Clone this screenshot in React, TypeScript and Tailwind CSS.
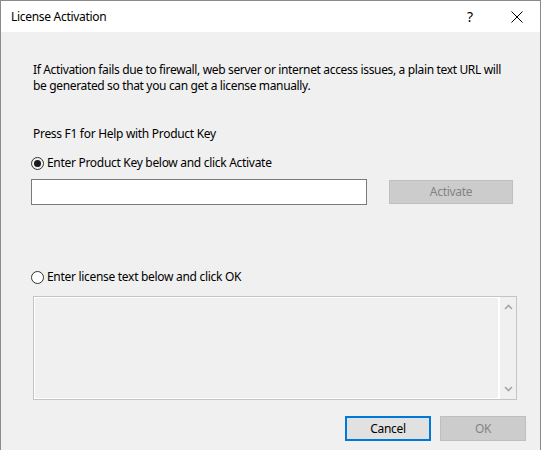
export default function App() {
  return (
    <div
      className="w-[541px] h-[450px] overflow-hidden border-l border-t border-r border-[#8a8a8a] bg-[#f0f0f0] text-[12px] leading-[16px] tracking-[-0.3px] text-black"
      style={{ fontFamily: '"Noto Sans", "Open Sans", sans-serif' }}
    >
      {/* title bar */}
      <div className="flex h-[31px] items-center bg-white pl-[10px]">
        <span className="flex-1 pt-[1px]">License Activation</span>
        <span className="w-[10px] text-center text-[14px]">?</span>
        <span className="ml-[36px] mr-[17px] flex w-[12px] justify-center">
          <svg width="12" height="12" viewBox="0 0 12 12" fill="none" stroke="#000" strokeWidth="1">
            <path d="M0.5 0.5 L11.5 11.5 M11.5 0.5 L0.5 11.5" />
          </svg>
        </span>
      </div>

      <div className="flex flex-col pl-[30px]">
        <p className="mt-[30px] w-[474px] pl-[2px] tracking-[-0.35px]">
          If Activation fails due to firewall, web server or internet access issues, a plain text URL will be
          generated so that you can get a license manually.
        </p>

        <div className="mt-[32px] pl-[2px]">Press F1 for Help with Product Key</div>

        <label className="mt-[13px] flex h-[16px] items-center gap-[3px]">
          <span className="flex h-[13px] w-[13px] items-center justify-center rounded-full border border-[#333]">
            <span className="h-[7px] w-[7px] rounded-full bg-[#1a1a1a]" />
          </span>
          <span>Enter Product Key below and click Activate</span>
        </label>

        <div className="mt-[8px] flex items-center">
          <input className="h-[26px] w-[336px] border border-[#7a7a7a] bg-white px-1 outline-none" />
          <button
            disabled
            className="ml-[22px] h-[24px] w-[124px] border border-[#bfbfbf] bg-[#cccccc] text-[#838383]"
          >
            Activate
          </button>
        </div>

        <label className="mt-[64px] flex h-[16px] items-center gap-[3px]">
          <span className="h-[13px] w-[13px] rounded-full border border-[#333] bg-white" />
          <span>Enter license text below and click OK</span>
        </label>

        <div className="ml-[2px] mt-[11px] flex h-[104px] w-[484px] border border-[#c4c4c4]">
          <div className="flex-1 border border-white" />
          <div className="flex w-[17px] flex-col items-center justify-between border-l border-white py-[7px]">
            <svg width="9" height="6" viewBox="0 0 9 6" fill="none" stroke="#a6a6a6" strokeWidth="1.6">
              <path d="M1 5 L4.5 1.5 L8 5" />
            </svg>
            <svg width="9" height="6" viewBox="0 0 9 6" fill="none" stroke="#a6a6a6" strokeWidth="1.6">
              <path d="M1 1 L4.5 4.5 L8 1" />
            </svg>
          </div>
        </div>

        <div className="mt-[16px] flex justify-end gap-[9px] pr-[14px]">
          <button className="h-[25px] w-[86px] border-2 border-[#0078d7] bg-[#e1e1e1]">Cancel</button>
          <button disabled className="h-[25px] w-[86px] border border-[#bfbfbf] bg-[#cccccc] text-[#838383]">
            OK
          </button>
        </div>
      </div>
    </div>
  );
}
